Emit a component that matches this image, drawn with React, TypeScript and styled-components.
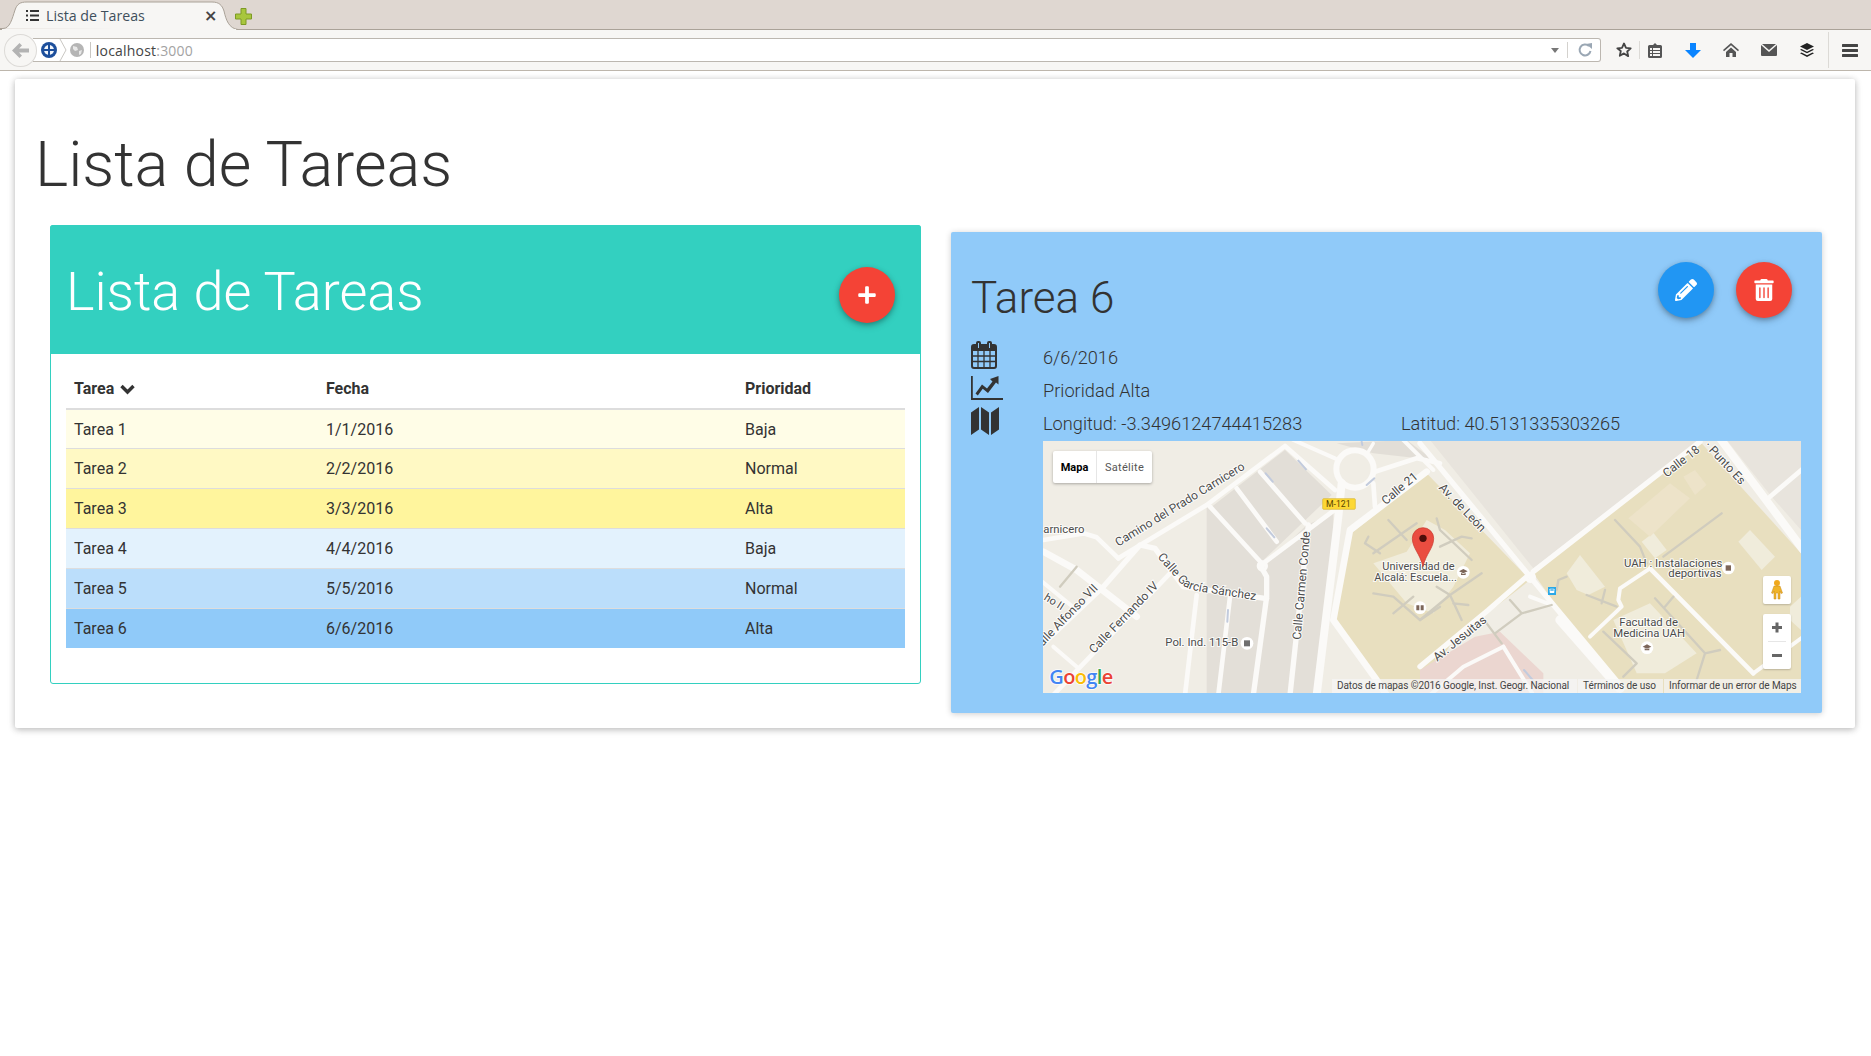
import React from "react";
import styled, { createGlobalStyle } from "styled-components";
import { FaPencilAlt, FaPlus, FaTrashAlt } from "react-icons/fa";

const Global = createGlobalStyle`
  html, body { margin: 0; padding: 0; background: #fff; }
  body { font-family: Roboto, "Liberation Sans", sans-serif; color: #333; width: 1871px; height: 1056px; overflow: hidden; }
`;

const TabBar = styled.div`
  display: flex; align-items: flex-start; height: 29px; background: #dfd7d1;
  border-bottom: 1px solid #aaa298; padding-left: 0;
`;
const Tab = styled.div`
  position: relative; width: 232px; height: 29px; display: flex; align-items: center;
  padding: 2px 0 0 26px; box-sizing: border-box;
`;
const TabShape = styled.svg`
  position: absolute; left: 0; top: 0; width: 240px; height: 31px;
`;
const TabList = styled.svg`
  position: relative; width: 13px; height: 11px; margin-right: 7px;
`;
const TabTitle = styled.span`
  position: relative; font: 14.2px "Open Sans", sans-serif; color: #3f4f5c; width: 158px;
`;
const TabClose = styled.span`
  position: relative; font: bold 16px "DejaVu Sans", sans-serif; color: #444; line-height: 14px;
`;
const NewTab = styled.svg`
  width: 17px; height: 17px; margin: 8px 0 0 3px;
`;
const Toolbar = styled.div`
  display: flex; align-items: center; height: 40px; background: #f7f6f4;
  border-bottom: 1px solid #bdb6ac; box-sizing: content-box;
`;
const BackButton = styled.div`
  width: 31px; height: 31px; border-radius: 50%; border: 1px solid #dcdad7; background: #f7f6f4;
  margin-left: 4px; display: flex; align-items: center; justify-content: center; position: relative; z-index: 1;
`;
const UrlBar = styled.div`
  width: 1570px; height: 22px; margin-left: -4px; background: #fff; border: 1px solid #bcb7b0; border-left: none;
  border-radius: 0 3px 3px 0; display: flex; align-items: center; padding-left: 6px; box-sizing: content-box;
`;
const UrlIcons = styled.svg`
  width: 52px; height: 22px; margin-right: 5px; flex: none;
`;
const UrlHost = styled.span`
  font: 14px "Open Sans", sans-serif; color: #444; letter-spacing: .2px;
`;
const UrlPort = styled.span`
  font: 14px "Open Sans", sans-serif; color: #a3a3a3; flex: 1; letter-spacing: .2px;
`;
const UrlEnd = styled.svg`
  width: 56px; height: 22px; flex: none;
`;
const Tools = styled.div`
  display: flex; align-items: center; height: 40px; padding-left: 8px;
`;
const ToolIcon = styled.div<{ $w: number; $ml?: number }>`
  width: ${(p) => p.$w}px; margin-left: ${(p) => p.$ml ?? 0}px; display: flex; align-items: center; justify-content: center;
`;
const ToolSep = styled.div<{ $h: number; $ml?: number }>`
  width: 1px; height: ${(p) => p.$h}px; background: #dcdad6; margin-left: ${(p) => p.$ml ?? 0}px;
`;

const Card = styled.main`
  margin: 8px 16px 0 15px; height: 649px; background: #fff; box-sizing: border-box;
  box-shadow: 0 1px 6px rgba(0,0,0,.2), 0 2px 8px rgba(0,0,0,.12); border-radius: 2px;
`;
const PageTitle = styled.h1`
  margin: 0; padding: 51px 0 0 20px; height: 146px; box-sizing: border-box;
  font: 300 63px/1.1 Roboto, sans-serif; color: #333;
`;
const Columns = styled.div`
  display: flex; align-items: flex-start; gap: 30px; padding-left: 35px;
`;
const ListPanel = styled.section`
  width: 871px; height: 459px; box-sizing: border-box; border: 1px solid #33d0c0; border-radius: 3px; background: #fff;
`;
const ListHead = styled.header`
  height: 129px; margin: -1px -1px 0; background: #33d0c0; border-radius: 3px 3px 0 0; display: flex;
  align-items: center; justify-content: space-between; padding: 0 26px 0 16px;
`;
const ListTitle = styled.h2`
  margin: 5px 0 0; font: 300 54px/1.1 Roboto, sans-serif; color: #fff;
`;
const Fab = styled.button<{ $bg: string }>`
  width: 56px; height: 56px; padding: 0; border: 0; border-radius: 50%; background: ${(p) => p.$bg}; color: #fff;
  display: flex; align-items: center; justify-content: center; flex: none; font-size: inherit;
  box-shadow: 0 2px 5px rgba(0,0,0,.26), 0 3px 8px rgba(0,0,0,.14);
`;
const AddFab = styled(Fab)`
  margin-top: 10px; font-size: 20px;
`;
const TableWrap = styled.div`
  padding: 15px 15px 0;
`;
const Table = styled.table`
  width: 839px; border-collapse: collapse; table-layout: fixed; font-size: 16px; color: #333;
`;
const Th = styled.th<{ $w: number }>`
  width: ${(p) => p.$w}px; height: 40px; padding: 0 8px; text-align: left; font-weight: 700; border-bottom: 2px solid #ddd;
  box-sizing: border-box;
`;
const Chevron = styled.svg`
  width: 15px; height: 11px; vertical-align: -1px; margin-left: 6px;
`;
const Tr = styled.tr<{ $bg: string }>`
  background: ${(p) => p.$bg};
`;
const Td = styled.td`
  height: 39.9px; padding: 0 8px; border-top: 1px solid #ddd; box-sizing: border-box;
`;
const DetailPanel = styled.section`
  width: 871px; height: 481px; margin-top: 7px; background: #90caf9; border-radius: 2px; box-sizing: border-box;
  padding: 30px 21px 0 20px; box-shadow: 0 1px 6px rgba(0,0,0,.2);
`;
const DetailHead = styled.header`
  display: flex; align-items: flex-start; justify-content: space-between; height: 79px; padding-right: 9px;
`;
const DetailTitle = styled.h2`
  margin: 12px 0 0; font: 300 44px/1.1 Roboto, sans-serif; color: #333;
`;
const Actions = styled.div`
  display: flex; gap: 22px; font-size: 22px;
`;
const InfoGrid = styled.div`
  display: grid; grid-template-columns: 72px 1fr; grid-auto-rows: 33px; font: 300 18.2px Roboto, sans-serif; color: #333;
  align-items: center;
`;
const InfoIcon = styled.div`
  height: 33px; display: flex; align-items: center; color: #333; margin-top: -5px;
`;
const InfoText = styled.div`
  display: flex;
`;
const Lon = styled.span`
  width: 358px;
`;
const MapBox = styled.div`
  position: relative; width: 758px; height: 252px; margin: 1px 0 0 72px; overflow: hidden; background: #f0ede5;
`;
const MapSvg = styled.svg`
  display: block; width: 758px; height: 252px;
  text { font-family: Roboto, "Liberation Sans", sans-serif; font-size: 34px; fill: #4c4c4c; stroke: #fff; stroke-width: 6px; paint-order: stroke; stroke-opacity: .85; }
`;
const MapType = styled.div`
  position: absolute; left: 10px; top: 10px; display: flex; height: 32px; background: #fff; border-radius: 2px;
  box-shadow: 0 1px 3px rgba(0,0,0,.3); font: 11px Roboto, sans-serif;
`;
const MapTypeItem = styled.div<{ $on?: boolean; $w: number }>`
  width: ${(p) => p.$w}px; display: flex; align-items: center; justify-content: center;
  color: ${(p) => (p.$on ? "#000" : "#565656")}; font-weight: ${(p) => (p.$on ? 700 : 400)};
  letter-spacing: ${(p) => (p.$on ? 0 : ".3px")};
  border-right: ${(p) => (p.$on ? "1px solid #e6e6e6" : "none")}; box-sizing: border-box;
`;
const Pegman = styled.div`
  position: absolute; right: 10px; top: 135px; width: 28px; height: 28px; background: #fff; border-radius: 2px;
  display: flex; align-items: center; justify-content: center; box-shadow: 0 1px 2px rgba(0,0,0,.2);
`;
const ZoomBox = styled.div`
  position: absolute; right: 10px; bottom: 24px; width: 28px; height: 55px; background: #fff; border-radius: 2px;
  box-shadow: 0 1px 2px rgba(0,0,0,.2);
`;
const Attribution = styled.div`
  position: absolute; right: 0; bottom: 0; height: 14px; display: flex; align-items: center;
  font: 10px/14px Roboto, sans-serif; color: #444; letter-spacing: -.08px;
`;
const AttrItem = styled.span<{ $w: number }>`
  width: ${(p) => p.$w}px; box-sizing: border-box; padding-left: 5px; height: 14px; background: rgba(245,245,245,.72);
  white-space: nowrap; margin-left: 1px; overflow: hidden;
`;

const rows = [
  ["Tarea 1", "1/1/2016", "Baja", "#fffde7"],
  ["Tarea 2", "2/2/2016", "Normal", "#fff9c4"],
  ["Tarea 3", "3/3/2016", "Alta", "#fff59d"],
  ["Tarea 4", "4/4/2016", "Baja", "#e3f2fd"],
  ["Tarea 5", "5/5/2016", "Normal", "#bbdefb"],
  ["Tarea 6", "6/6/2016", "Alta", "#90caf9"],
];

const Calendar = () => (
  <svg width="26" height="28" viewBox="0 0 26 28">
    <path fill="#333" fillRule="evenodd" d="M3 3h2V2a2 2 0 0 1 2-2h1a2 2 0 0 1 2 2v1h6V2a2 2 0 0 1 2-2h1a2 2 0 0 1 2 2v1h2a3 3 0 0 1 3 3v19a3 3 0 0 1-3 3H3a3 3 0 0 1-3-3V6a3 3 0 0 1 3-3zM7 2v5h1V2zM18 2v5h1V2zM2 10v15a1 1 0 0 0 1 1h20a1 1 0 0 0 1-1V10z" />
    <path stroke="#333" strokeWidth="1.3" d="M7 10v16M13 10v16M19 10v16M2 15h22M2 20.500h22" />
  </svg>
);

const LineChart = () => (
  <svg width="32" height="24" viewBox="0 0 32 24">
    <path fill="#333" d="M0 0h1.800v22H32v2H0z" />
    <path fill="#333" d="M4.500 17.500L11 8.500l5 4 5.500-7L19 3l8.500-3v8.500l-2.500-2L17 17l-5.300-4.300-4.900 6.800z" />
  </svg>
);

const MapGlyph = () => (
  <svg width="28" height="28" viewBox="0 0 28 28">
    <path fill="#333" d="M0 5.500L8 0v22.500L0 28zM10 0l8 5.500V28l-8-5.500zM20 5.500L28 0v22.500L20 28z" />
  </svg>
);

const T = ({ x, y, r, s, c }: { x: number; y: number; r?: number; s?: number; c: string }) => (
  <text x={x} y={y} transform={r ? `rotate(${r} ${x} ${y})` : undefined} style={s ? { fontSize: s } : undefined}>{c}</text>
);

const roadsA: [string, number][] = [
  ["M10 300L130 280L170 292L235 355", 14],
  ["M40 765L395 395", 14],
  ["M235 355L500 195L735 18L885 150", 14],
  ["M0 620L190 440L300 315L345 325L430 440L680 476", 16],
  ["M10 335L110 390L290 530", 20],
  ["M0 420L110 510", 12],
  ["M40 620L110 680", 12],
  ["M435 765L470 465", 14],
  ["M535 765L570 470", 14],
  ["M640 765L680 470L680 410L660 375", 16],
  ["M750 765L805 255", 16],
  ["M830 765L895 230L905 130", 24],
  ["M510 200L670 375", 14],
  ["M590 145L710 305", 14],
  ["M660 95L795 250", 14],
  ["M670 370L890 205", 14],
  ["M760 0L885 55", 12],
  ["M1005 95L1130 55L1200 70", 14],
  ["M1000 130L1005 200", 14],
  ["M1160 95L930 270L880 540L1010 720L1040 765", 20],
  ["M1000 10L985 35", 10],
  ["M1090 0L1180 90", 12],
];
const roadsB: [string, number][] = [
  ["M0 10L330 410L600 735", 16],
  ["M420 540L600 745", 28],
  ["M320 410L205 510L0 680", 16],
  ["M340 395L840 5", 16],
  ["M900 -5L1150 330", 24],
  ["M1050 170L1150 85", 14],
  ["M690 385L1000 700", 14],
  ["M690 385L600 445L595 480L605 500L510 590", 12],
  ["M1150 590L1000 700", 12],
  ["M250 620L130 680L30 765", 12],
  ["M250 620L340 765", 12],
  ["M330 470L395 495", 12],
];
const pathsA = [
  "M975 310L985 290M975 310L1020 340M1000 340L1130 250M1045 240L1100 300",
  "M1000 460L1060 470L1140 540L1200 500M1060 520L1120 470",
];
const pathsB = [
  "M585 240L660 320L680 370M730 350L905 220M500 465L590 500M555 450L545 490M705 475L855 640L830 720M855 640L900 630M735 500L760 470M550 575L650 670L610 710M270 480L305 520L225 580M305 520L395 495M200 550L245 610M440 410L415 420L410 450",
  "M50 235L60 270L155 360M60 320L125 290L155 295M185 400L90 465L50 440M90 465L125 540M90 465L0 540M100 490L145 495",
];

const GoogleMap = () => (
  <MapSvg viewBox="9 3 2274 756">
    <rect x="0" y="0" width="2400" height="800" fill="#f0ede5" />
    <path fill="#e3dfd8" d="M500 200L500 765L830 765L880 300L880 220L800 255L680 370Z" />
    <path fill="#e2ded7" d="M515 200L735 30L875 165L665 365ZM890 10L1100 0L1180 60L1000 40Z" />
    <path fill="#e8dfbf" d="M935 280L1160 100L1470 420L1240 600L1140 765L1040 765L880 545Z" />
    <path fill="#e8e4dd" d="M1170 0L1480 385L1980 0ZM2060 0L2283 0L2283 270L2195 170Z" />
    <path fill="#e8dfbf" d="M1480 400L1985 10L2283 340L2283 765L1740 765Z" />
    <path fill="#ebd6d0" d="M1305 590L1380 575L1510 700L1510 765L1140 765L1140 690Z" />
    <g fill="#f0ecdb">
      <path d="M1000 370L1100 335L1160 240L1215 270L1290 340L1240 440L1180 520L1100 490Z" />
      <path d="M1580 400L1620 345L1695 440L1645 465L1610 450Z" />
      <path d="M1805 305L1840 278L1880 330L1845 355Z" />
      <path d="M2095 305L2130 270L2205 350L2165 390Z" />
      <path d="M1720 540L1830 490L1970 640L1875 700L1790 700Z" />
      <path d="M2250 500L2283 470L2283 570L2250 540Z" />
    </g>
    <path fill="#ede3c9" d="M1765 235L1890 130L1950 175L1830 290ZM1930 110L1965 90L2000 135L1965 165Z" />
    <g fill="none" stroke="#fbfaf8" strokeLinecap="round" strokeLinejoin="round">
      {roadsA.map(([d, w]) => <path key={d} d={d} strokeWidth={w} />)}
      <g transform="translate(1140 0)">{roadsB.map(([d, w]) => <path key={d} d={d} strokeWidth={w} />)}</g>
      <circle cx="945" cy="87" r="56" strokeWidth="18" />
      <circle cx="667" cy="378" r="12" strokeWidth="10" />
      <circle cx="1471" cy="412" r="12" strokeWidth="10" />
    </g>
    <g fill="none" stroke="#d0ccbe" strokeWidth="7" strokeLinecap="round" strokeLinejoin="round">
      {pathsA.map((d) => <path key={d} d={d} />)}
      <g transform="translate(1140 0)">{pathsB.map((d) => <path key={d} d={d} />)}</g>
      <path d="M110 380L60 440" />
    </g>
    <g fill="none" stroke="#c2cbdd" strokeWidth="6" strokeLinecap="round">
      <path d="M775 62L798 88M980 135L1003 115M680 265L703 292M677 100L698 125M562 545L564 510M1452 690L1478 720M965 5L967 15" />
    </g>

    <T x={235} y={320} r={-31.500} c="Camino del Prado Carnicero" s={36} />
    <T x={10} y={280} c="arnicero" />
    <text style={{ fontSize: 36 }}>
      <textPath href="#garcia">Calle García Sánchez</textPath>
    </text>
    <path id="garcia" d="M352 352L420 428Q440 450 490 456L670 484" fill="none" />
    <T x={162} y={642} r={-46} c="Calle Fernando IV" s={36} />
    <T x={8} y={620} r={-46} c="alle Alfonso VII" s={36} />
    <T x={10} y={478} r={32} c="ho II" s={33} />
    <T x={782} y={600} r={-85} c="Calle Carmen Conde" s={36} />
    <T x={376} y={618} c="Pol. Ind. 115-B" />
    <T x={1037} y={196} r={-40} c="Calle 21" s={36} />
    <T x={1027} y={391} s={33} c="Universidad de" />
    <T x={1003} y={424} s={33} c="Alcalá: Escuela..." />
    <rect x="848" y="176" width="98" height="32" rx="3" fill="#fdd835" stroke="#d8b52f" strokeWidth="2" />
    <text x="858" y="201" style={{ fontSize: 26, strokeWidth: 0, fill: "#554300" }}>M-121</text>
    <circle cx="621" cy="610" r="19" fill="#fff" />
    <rect x="612" y="601" width="18" height="18" fill="#6f6f6f" />
    <circle cx="1140" cy="503" r="19" fill="#fff" />
    <path fill="#7c6659" d="M1129 496h9v15h-9zM1142 496h9v15h-9z" />

    <g transform="translate(1140 0)">
      <T x={55} y={145} r={46} c="Av. de León" s={36} />
      <T x={740} y={113} r={-38} c="Calle 18" s={36} />
      <T x={852} y={18} r={47} c="· Punto Es" s={36} />
      <T x={612} y={380} c="UAH : Instalaciones" />
      <T x={745} y={412} c="deportivas" />
      <T x={598} y={559} c="Facultad de" />
      <T x={580} y={592} c="Medicina UAH" />
      <T x={52} y={665} r={-39} c="Av. Jesuitas" s={36} />
      <circle cx="925" cy="384" r="19" fill="#fff" />
      <rect x="917" y="376" width="16" height="16" fill="#7d6557" />
      <circle cx="681" cy="623" r="19" fill="#fff" />
      <path fill="#7c6659" d="M681 613l13 7-13 6-13-6zM674 625l7 3 7-3v6h-14z" />
      <circle cx="130" cy="397" r="19" fill="#fff" />
      <path fill="#7c6659" d="M130 387l13 7-13 6-13-6zM123 399l7 3 7-3v6h-14z" />
      <rect x="384" y="441" width="24" height="24" fill="#2aa8e8" />
      <rect x="389" y="446" width="14" height="13" rx="2" fill="#fff" />
      <rect x="391" y="448" width="10" height="4" fill="#2aa8e8" />
    </g>

    <path fill="#ea4d40" stroke="#c5352a" strokeWidth="2" d="M1149 380C1140 340 1117 325 1117 295a32 32 0 0 1 64 0C1181 325 1158 340 1149 380Z" />
    <circle cx="1149" cy="295" r="11" fill="#4e0e0a" />

    <text x="28" y="733" style={{ fontFamily: "'Open Sans', sans-serif", fontWeight: 600, fontSize: 60, strokeWidth: 5, letterSpacing: -2 }}>
      <tspan style={{ fill: "#4285f4" }}>G</tspan>
      <tspan style={{ fill: "#ea4335" }}>o</tspan>
      <tspan style={{ fill: "#fbbc05" }}>o</tspan>
      <tspan style={{ fill: "#4285f4" }}>g</tspan>
      <tspan style={{ fill: "#34a853" }}>l</tspan>
      <tspan style={{ fill: "#ea4335" }}>e</tspan>
    </text>
  </MapSvg>
);

export default function App() {
  return (
    <>
      <Global />
      <TabBar>
        <Tab>
          <TabShape viewBox="0 0 240 31">
            <path fill="#f7f6f4" stroke="#aaa298" d="M0 28.500H3C10 28.500 12 19 15 10C17 4 20 2 27 2H212C219 2 222 5 224 11C226 20 229 28.500 238 29.500" />
            <path fill="#f7f6f4" d="M2 29H236V31H2Z" />
          </TabShape>
          <TabList viewBox="0 0 13 11">
            <path fill="#333" d="M0 0h2v2H0zM4 0h9v2H4zM0 4.500h2v2H0zM4 4.500h9v2H4zM0 9h2v2H0zM4 9h9v2H4z" />
          </TabList>
          <TabTitle>Lista de Tareas</TabTitle>
          <TabClose>×</TabClose>
        </Tab>
        <NewTab viewBox="0 0 17 17">
          <path fill="#a8c63d" stroke="#7d9a24" d="M6 .5h5v5.500h5.500v5H11v5.500H6V11H.5V6H6z" />
        </NewTab>
      </TabBar>
      <Toolbar>
        <BackButton>
          <svg width="17" height="15" viewBox="0 0 17 15">
            <path fill="#b3b3b3" d="M7.500 0l2.500 2.500-3 3h10v4H7l3 3L7.500 15 0 7.500z" />
          </svg>
        </BackButton>
        <UrlBar>
          <UrlIcons viewBox="0 0 52 22">
            <circle cx="10" cy="11" r="8" fill="#1d4f9c" />
            <circle cx="10" cy="11" r="5" fill="#f2f6fb" />
            <path fill="#1d4f9c" d="M9 6h2v4h6v2h-6v5H9v-5H3v-2h6z" />
            <path fill="none" stroke="#c9c7c3" d="M21 0l6 11-6 11" />
            <circle cx="38" cy="11" r="7" fill="#b5b5b5" />
            <path fill="#e8e8e8" d="M34 7l4 1 1 3-3 1-2-2zM40 12l3-1-1 4-2 1z" />
            <rect x="51" y="3" width="1" height="16" fill="#c9c7c3" />
          </UrlIcons>
          <UrlHost>localhost</UrlHost>
          <UrlPort>:3000</UrlPort>
          <UrlEnd viewBox="0 0 56 22">
            <path fill="#777" d="M7 9h8l-4 5z" />
            <rect x="23" y="3" width="1" height="16" fill="#d4d2ce" />
            <path fill="none" stroke="#9aa7b4" strokeWidth="2" d="M45 7a5.500 5.500 0 1 0 1.500 5" />
            <path fill="#9aa7b4" d="M42 5l6-1v6z" />
          </UrlEnd>
        </UrlBar>
        <Tools>
          <ToolIcon $w={30}>
            <svg width="16" height="16" viewBox="0 0 16 16">
              <path fill="none" stroke="#444" strokeWidth="1.800" strokeLinejoin="round" d="M8 1.500l2 4.300 4.700.5-3.500 3.200 1 4.700L8 11.400l-4.200 2.300 1-4.700L1.300 6.300 6 5.800z" />
            </svg>
          </ToolIcon>
          <ToolSep $h={18} />
          <ToolIcon $w={30}>
            <svg width="14" height="15" viewBox="0 0 14 15">
              <path fill="#555" fillRule="evenodd" d="M1.500 2H5l2-2 2 2h3.500A1.500 1.500 0 0 1 14 3.500v10a1.500 1.500 0 0 1-1.500 1.500h-11A1.500 1.500 0 0 1 0 13.500v-10A1.500 1.500 0 0 1 1.500 2zM2 5v2h2V5zM5 5v2h7V5zM2 8v2h2V8zM5 8v2h7V8zM2 11v2h2v-2zM5 11v2h7v-2z" />
            </svg>
          </ToolIcon>
          <ToolIcon $w={38} $ml={4}>
            <svg width="16" height="15" viewBox="0 0 16 15">
              <path fill="#0a84ff" d="M5 0h6v7h5l-8 8-8-8h5z" />
            </svg>
          </ToolIcon>
          <ToolIcon $w={38}>
            <svg width="16" height="14" viewBox="0 0 16 14">
              <path fill="#555" d="M8 0l8 7-1 1.200L8 2.300 1 8.200 0 7zM3 9l5-4.500L13 9v5H9.500v-4h-3v4H3z" />
            </svg>
          </ToolIcon>
          <ToolIcon $w={38}>
            <svg width="16" height="12" viewBox="0 0 16 12">
              <path fill="#555" d="M1 0h14L8 6zM0 1l8 7 8-7v10a1 1 0 0 1-1 1H1a1 1 0 0 1-1-1z" />
            </svg>
          </ToolIcon>
          <ToolIcon $w={38}>
            <svg width="14" height="14" viewBox="0 0 14 14">
              <path fill="#222" d="M7 0l7 3.500L7 7 0 3.500zM1.500 6L7 8.700 12.500 6 14 6.800 7 10.300 0 6.800zM1.500 9.500L7 12.200l5.500-2.700 1.500.8L7 14 0 10.300z" />
            </svg>
          </ToolIcon>
          <ToolSep $h={36} $ml={2} />
          <ToolIcon $w={42}>
            <svg width="16" height="13" viewBox="0 0 16 13">
              <path fill="#444" d="M1 0h14a1 1 0 0 1 0 3H1a1 1 0 0 1 0-3zM1 5h14a1 1 0 0 1 0 3H1a1 1 0 0 1 0-3zM1 10h14a1 1 0 0 1 0 3H1a1 1 0 0 1 0-3z" />
            </svg>
          </ToolIcon>
        </Tools>
      </Toolbar>
      <Card>
        <PageTitle>Lista de Tareas</PageTitle>
        <Columns>
          <ListPanel>
            <ListHead>
              <ListTitle>Lista de Tareas</ListTitle>
              <AddFab $bg="#f44336"><FaPlus /></AddFab>
            </ListHead>
            <TableWrap>
              <Table>
                <thead>
                  <tr>
                    <Th $w={252}>
                      Tarea
                      <Chevron viewBox="0 0 15 11">
                        <path fill="none" stroke="#333" strokeWidth="3.400" d="M1.500 2l6 6 6-6" />
                      </Chevron>
                    </Th>
                    <Th $w={419}>Fecha</Th>
                    <Th $w={168}>Prioridad</Th>
                  </tr>
                </thead>
                <tbody>
                  {rows.map((r) => (
                    <Tr key={r[0]} $bg={r[3]}>
                      <Td>{r[0]}</Td>
                      <Td>{r[1]}</Td>
                      <Td>{r[2]}</Td>
                    </Tr>
                  ))}
                </tbody>
              </Table>
            </TableWrap>
          </ListPanel>
          <DetailPanel>
            <DetailHead>
              <DetailTitle>Tarea 6</DetailTitle>
              <Actions>
                <Fab $bg="#2196f3"><FaPencilAlt /></Fab>
                <Fab $bg="#f44336"><FaTrashAlt /></Fab>
              </Actions>
            </DetailHead>
            <InfoGrid>
              <InfoIcon><Calendar /></InfoIcon>
              <InfoText>6/6/2016</InfoText>
              <InfoIcon><LineChart /></InfoIcon>
              <InfoText>Prioridad Alta</InfoText>
              <InfoIcon><MapGlyph /></InfoIcon>
              <InfoText><Lon>Longitud: -3.3496124744415283</Lon><span>Latitud: 40.5131335303265</span></InfoText>
            </InfoGrid>
            <MapBox>
              <GoogleMap />
              <MapType>
                <MapTypeItem $on $w={44}>Mapa</MapTypeItem>
                <MapTypeItem $w={55}>Satélite</MapTypeItem>
              </MapType>
              <Pegman>
                <svg width="12" height="20" viewBox="0 0 12 20">
                  <circle cx="6" cy="3" r="3" fill="#f0a81c" />
                  <path fill="#f0b428" stroke="#c9881a" strokeWidth=".5" d="M3 6h6l2.500 7-1.500 .5L9 11v8H7v-6H5v6H3v-8l-1 2.500L.5 13z" />
                </svg>
              </Pegman>
              <ZoomBox>
                <svg width="28" height="55" viewBox="0 0 28 55">
                  <path fill="#666" d="M9 12h10v3H9z M12.500 8.500h3v10h-3z M9 40h10v3H9z" />
                  <rect x="5" y="27" width="18" height="1" fill="#e6e6e6" />
                </svg>
              </ZoomBox>
              <Attribution>
                <AttrItem $w={245}>Datos de mapas ©2016 Google, Inst. Geogr. Nacional</AttrItem>
                <AttrItem $w={85}>Términos de uso</AttrItem>
                <AttrItem $w={137}>Informar de un error de Maps</AttrItem>
              </Attribution>
            </MapBox>
          </DetailPanel>
        </Columns>
      </Card>
    </>
  );
}
